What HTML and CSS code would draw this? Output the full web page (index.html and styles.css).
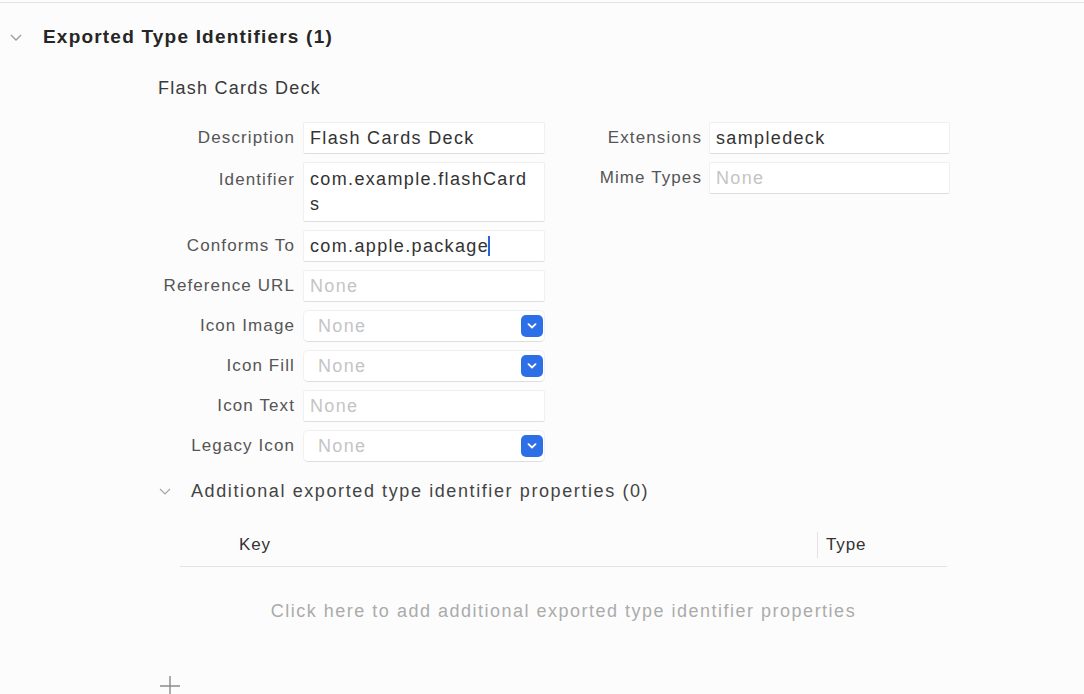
FILE: index.html
```html
<!DOCTYPE html>
<html>
<head>
<meta charset="utf-8">
<link rel="stylesheet" href="styles.css">
</head>
<body>
<div class="page">
  <div class="topline"></div>
  <div class="section-head">
    <svg class="chev" width="14" height="10" viewBox="0 0 14 10"><path d="M2 3 L7 8 L12 3" fill="none" stroke="#9a9a9a" stroke-width="1.3"/></svg>
    <h1 class="section-title">Exported Type Identifiers (1)</h1>
  </div>
  <div class="item">
    <div class="item-title">Flash Cards Deck</div>
    <div class="forms">
      <div class="form form-left">
        <div class="label">Description</div>
        <div class="field"><span class="value">Flash Cards Deck</span></div>
        <div class="label label-multi">Identifier</div>
        <div class="field field-multi"><span class="value">com.example.flashCard<br>s</span></div>
        <div class="label">Conforms To</div>
        <div class="field"><span class="value">com.apple.package</span><span class="caret"></span></div>
        <div class="label">Reference URL</div>
        <div class="field"><span class="ph">None</span></div>
        <div class="label">Icon Image</div>
        <div class="field popup"><span class="ph">None</span><span class="popbtn"><svg width="10" height="6" viewBox="0 0 10 6"><path d="M1.5 1.2 L5 4.5 L8.5 1.2" fill="none" stroke="#fff" stroke-width="1.8" stroke-linecap="round" stroke-linejoin="round"/></svg></span></div>
        <div class="label">Icon Fill</div>
        <div class="field popup"><span class="ph">None</span><span class="popbtn"><svg width="10" height="6" viewBox="0 0 10 6"><path d="M1.5 1.2 L5 4.5 L8.5 1.2" fill="none" stroke="#fff" stroke-width="1.8" stroke-linecap="round" stroke-linejoin="round"/></svg></span></div>
        <div class="label">Icon Text</div>
        <div class="field"><span class="ph">None</span></div>
        <div class="label">Legacy Icon</div>
        <div class="field popup"><span class="ph">None</span><span class="popbtn"><svg width="10" height="6" viewBox="0 0 10 6"><path d="M1.5 1.2 L5 4.5 L8.5 1.2" fill="none" stroke="#fff" stroke-width="1.8" stroke-linecap="round" stroke-linejoin="round"/></svg></span></div>
      </div>
      <div class="form form-right">
        <div class="label">Extensions</div>
        <div class="field"><span class="value">sampledeck</span></div>
        <div class="label">Mime Types</div>
        <div class="field"><span class="ph">None</span></div>
      </div>
    </div>
    <div class="sub-head">
      <svg class="chev" width="14" height="10" viewBox="0 0 14 10"><path d="M2 3 L7 8 L12 3" fill="none" stroke="#a5a5a5" stroke-width="1.2"/></svg>
      <span class="sub-title">Additional exported type identifier properties (0)</span>
    </div>
    <div class="table">
      <div class="thead">
        <div class="col-key">Key</div>
        <div class="col-type">Type</div>
      </div>
      <div class="empty">Click here to add additional exported type identifier properties</div>
    </div>
    <div class="add">
      <svg width="24" height="24" viewBox="0 0 24 24"><path d="M12 2 V22 M2 12 H22" stroke="#8a8a8a" stroke-width="1.4" fill="none"/></svg>
    </div>
  </div>
</div>
</body>
</html>
```

FILE: styles.css
```css
html, body {
  margin: 0;
  padding: 0;
  background: #fcfcfc;
}
body {
  font-family: "Liberation Sans", Arial, sans-serif;
  font-size: 18px;
  color: #333;
  width: 1084px;
  height: 694px;
  overflow: hidden;
}
.page {
  padding-top: 2px;
}
.topline {
  height: 1px;
  background: #e4e4e4;
}
.section-head {
  display: flex;
  align-items: center;
  height: 30px;
  margin-top: 19px;
  padding-left: 9px;
}
.section-head .chev {
  margin-right: 20px;
}
.section-title {
  margin: 0;
  font-size: 19px;
  font-weight: bold;
  color: #262626;
  letter-spacing: 1.2px;
}
.item {
  margin-left: 158px;
}
.item-title {
  margin-top: 24px;
  height: 24px;
  line-height: 24px;
  color: #3a3a3a;
  letter-spacing: 1.25px;
}
.forms {
  display: flex;
  margin-top: 22px;
  gap: 39px;
}
.form {
  display: grid;
  column-gap: 9px;
  row-gap: 8px;
  align-content: start;
}
.form-left {
  grid-template-columns: 136px 242px;
}
.form-right {
  grid-template-columns: 117px 241px;
  column-gap: 8px;
}
.label {
  justify-self: end;
  font-size: 17px;
  line-height: 32px;
  height: 32px;
  color: #555;
  letter-spacing: 1.1px;
  margin-right: -1px;
  white-space: nowrap;
}
.label-multi {
  padding-top: 2px;
}
.field {
  box-sizing: border-box;
  height: 32px;
  background: #fff;
  border: 1px solid #f0f0f0;
  border-bottom-color: #dedede;
  border-radius: 2px;
  padding: 0 6px;
  display: flex;
  align-items: center;
  letter-spacing: 1.35px;
  white-space: nowrap;
}
.field-multi {
  height: 60px;
  align-items: flex-start;
  padding-top: 4px;
  line-height: 25px;
}
.value {
  color: #333;
}
.ph {
  color: #c4c4c4;
}
.caret {
  display: inline-block;
  width: 2px;
  height: 20px;
  background: #2a62d8;
  margin-left: -1px;
}
.popup {
  border-radius: 5px;
  padding-left: 14px;
  padding-right: 1px;
  justify-content: space-between;
}
.popbtn {
  width: 22px;
  height: 22px;
  border-radius: 5px;
  background: #2d6fe6;
  display: flex;
  align-items: center;
  justify-content: center;
}
.sub-head {
  display: flex;
  align-items: center;
  height: 28px;
  margin-top: 15px;
}
.sub-head .chev {
  margin-right: 19px;
}
.sub-title {
  color: #444;
  letter-spacing: 1.6px;
}
.table {
  margin-left: 22px;
  width: 767px;
  margin-top: 18px;
}
.thead {
  display: flex;
  align-items: center;
  height: 43px;
  border-bottom: 1px solid #e3e3e3;
  color: #333;
  font-size: 17px;
  letter-spacing: 0.9px;
}
.col-key {
  padding-left: 59px;
  flex: 0 0 637px;
  box-sizing: border-box;
}
.col-type {
  border-left: 1px solid #e3e3e3;
  padding-left: 8px;
  height: 26px;
  line-height: 26px;
}
.empty {
  height: 88px;
  display: flex;
  align-items: center;
  justify-content: center;
  color: #ababab;
  letter-spacing: 1.5px;
}
.add {
  margin-top: 19px;
  height: 24px;
}
.add svg {
  display: block;
}
```
